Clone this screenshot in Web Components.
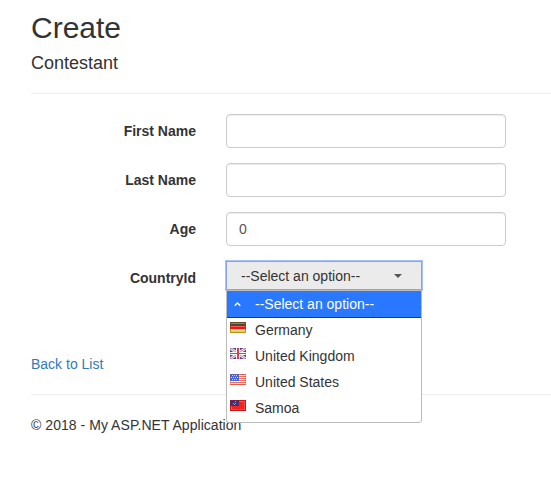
<!DOCTYPE html>
<html lang="en">
<head>
<meta charset="utf-8">
<title>Create</title>
<style>
html,body{margin:0;height:100%;overflow:hidden;background:#fff}
body{font:14px/20px "Liberation Sans",Arial,sans-serif;color:#333}
</style>
</head>
<body>
<create-page></create-page>
<script>
const define = (name, html, setup) => customElements.define(name, class extends HTMLElement {
  constructor() {
    super();
    this.attachShadow({mode: 'open'}).innerHTML = html;
  }
  connectedCallback() { if (setup) setup(this, this.shadowRoot); }
});

const flags = {
  none: '<svg width="16" height="11" viewBox="0 0 16 11"><path d="M4.7 6.8 7.5 4 10.3 6.8" fill="none" stroke="#fff" stroke-width="1.4"/></svg>',
  de: '<svg width="16" height="11"><path fill="#4b4639" d="M0 0h16v4H0z"/><path fill="#8a8474" d="M1 1h14v1H1z"/><path fill="#f01414" d="M0 4h16v3H0z"/><path fill="#ff5a50" d="M1 4h14v1H1z"/><path fill="#f8cc20" d="M0 7h16v4H0z"/><path fill="#ffe680" d="M1 8h14v1H1z"/><path fill="none" stroke="#795716" stroke-opacity=".5" d="M.5.5h15v10H.5z"/></svg>',
  gb: '<svg width="16" height="11" viewBox="0 0 16 11"><path fill="#3f4697" d="M0 0h16v11H0z"/><path stroke="#f5f2fa" stroke-width="2.8" d="m0 0 16 11M16 0 0 11"/><path stroke="#e0687c" stroke-width=".9" d="m0 0 16 11M16 0 0 11"/><path fill="#fff" d="M6 0h4v11H6zM0 4h16v3H0z"/><path fill="#e63a48" d="M7 0h2v11H7zM0 5h16v1H0z"/><path fill="none" stroke="#45437b" stroke-opacity=".2" d="M.5.5h15v10H.5z"/></svg>',
  us: '<svg width="16" height="11"><path fill="#fff0ec" d="M0 0h16v11H0z"/><path fill="#f46a5c" d="M0 0h16v1H0zM0 2h16v1H0zM0 4h16v1H0zM0 6h16v1H0zM0 8h16v1H0zM0 10h16v1H0z"/><path fill="#4468d8" d="M0 0h9v7H0z"/><path fill="#c9d8ff" d="M2 1h1v1H2zM4 1h1v1H4zM6 1h1v1H6zM1 3h1v1H1zM3 3h1v1H3zM5 3h1v1H5zM7 3h1v1H7zM2 5h1v1H2zM4 5h1v1H4zM6 5h1v1H6z"/><path fill="none" stroke="#b24a3b" stroke-opacity=".35" d="M.5.5h15v10H.5z"/></svg>',
  ws: '<svg width="16" height="11"><path fill="#f5211d" d="M0 0h16v11H0z"/><path fill="none" stroke="#ff5048" d="M1.5 1.5h13v8h-13z"/><path fill="#35357e" d="M0 0h9v6H0z"/><path fill="#9a9ac8" d="M5 1h1v1H5zM3 3h1v1H3zM5 3h1v1H5zM4 4h1v1H4z"/><path fill="none" stroke="#a51219" stroke-opacity=".6" d="M.5.5h15v10H.5z"/></svg>'
};

define('page-heading', `<style>
:host{display:block}
h2,h4{margin:0;font-weight:400;line-height:1.1}
h2{font-size:30px}
h4{font-size:18px;margin-top:10px}
</style><h2><slot name="title"></slot></h2><h4><slot></slot></h4>`);

define('page-rule', `<style>:host{display:block;height:1px;margin:20px 0;background:#eee}</style>`);

define('form-row', `<style>
:host{display:grid;grid-template-columns:165px 280px;column-gap:30px;height:34px;margin-bottom:15px}
.label{padding-top:7px;text-align:right;font-weight:700}
</style><div class="label"></div><slot></slot>`,
(host, root) => { root.querySelector('.label').textContent = host.getAttribute('label'); });

define('text-field', `<style>
:host{display:block;box-sizing:border-box;height:34px;padding:6px 12px;border:1px solid #ccc;border-radius:4px;background:#fff;color:#555;box-shadow:inset 0 1px 1px rgba(0,0,0,.075)}
</style><slot></slot>`);

define('country-option', `<style>
:host{display:flex;height:26px;box-sizing:border-box;padding:2px 0 4px 3px;gap:9px;color:#333}
:host([selected]){background:#2a78ff;color:#fff;height:27px;padding-top:3px;border-bottom:1px solid #2222e8}
span{display:block;width:16px;height:11px;margin-top:2px}
:host([selected]) span{margin-top:5px}
svg{display:block}
</style><span></span><slot></slot>`,
(host, root) => { root.querySelector('span').innerHTML = flags[host.getAttribute('flag')]; });

define('country-select', `<style>
:host{display:block;position:relative;width:196px;height:30px}
.button{display:flex;justify-content:space-between;align-items:center;box-sizing:border-box;height:29px;padding:2px 19px 0 14px;border:1px solid #88a5ea;background:#ebebeb;box-shadow:0 0 0 1px #a5c2fa}
.menu{position:absolute;top:29px;left:0;width:196px;box-sizing:border-box;border:1px solid #bbb;border-radius:0 0 3px 3px;background:#fff}
svg{display:block}
</style>
<div class="button"><slot name="value"></slot><svg width="8" height="4"><path fill="#555" d="M0 0h8L4 4z"/></svg></div>
<div class="menu"><slot></slot></div>`);

define('text-link', `<style>:host{display:block;color:#337ab7}</style><slot></slot>`);

define('create-page', `<style>
:host{display:block;padding:11px 0 0 31px}
form{display:block;margin:0;height:240px}
page-heading + page-rule{margin-top:19px}
footer{display:block;letter-spacing:.045px}
</style>
<page-heading><span slot="title">Create</span>Contestant</page-heading>
<page-rule></page-rule>
<form>
<form-row label="First Name"><text-field></text-field></form-row>
<form-row label="Last Name"><text-field></text-field></form-row>
<form-row label="Age"><text-field>0</text-field></form-row>
<form-row label="CountryId"><country-select>
<span slot="value">--Select an option--</span>
<country-option flag="none" selected>--Select an option--</country-option>
<country-option flag="de">Germany</country-option>
<country-option flag="gb">United Kingdom</country-option>
<country-option flag="us">United States</country-option>
<country-option flag="ws">Samoa</country-option>
</country-select></form-row>
</form>
<text-link>Back to List</text-link>
<page-rule></page-rule>
<footer>© 2018 - My ASP.NET Application</footer>`);
</script>
</body>
</html>
